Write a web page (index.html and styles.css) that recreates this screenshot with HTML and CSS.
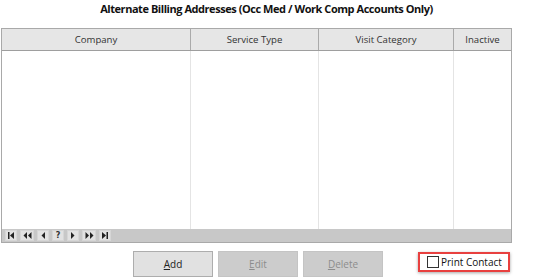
FILE: index.html
```html
<!DOCTYPE html>
<html lang="en">
<head>
    <meta charset="UTF-8">
    <title>Alternate Billing Addresses</title>
    <link rel="stylesheet" href="styles.css">
</head>
<body>
    <h1 class="title">Alternate Billing Addresses (Occ Med / Work Comp Accounts Only)</h1>

    <div class="grid">
        <div class="grid-head">
            <div class="col col-company">Company</div>
            <div class="col col-service">Service Type</div>
            <div class="col col-visit">Visit Category</div>
            <div class="col col-inactive">Inactive</div>
        </div>
        <div class="grid-body">
            <div class="col col-company"></div>
            <div class="col col-service"></div>
            <div class="col col-visit"></div>
            <div class="col col-inactive"></div>
        </div>
        <div class="nav">
            <button class="nav-btn">
                <svg width="8" height="7" viewBox="0 0 8 7"><rect x="1" y="0" width="1.5" height="7"/><path d="M7 0 L3 3.5 L7 7 Z"/></svg>
            </button>
            <button class="nav-btn nav-wide">
                <svg width="9" height="7" viewBox="0 0 9 7"><path d="M4 0 L0.5 3.5 L4 7 Z"/><path d="M8.5 0 L5 3.5 L8.5 7 Z"/></svg>
            </button>
            <button class="nav-btn">
                <svg width="6" height="7" viewBox="0 0 6 7"><path d="M5 0 L1.5 3.5 L5 7 Z"/></svg>
            </button>
            <button class="nav-btn nav-q">?</button>
            <button class="nav-btn">
                <svg width="6" height="7" viewBox="0 0 6 7"><path d="M1 0 L4.5 3.5 L1 7 Z"/></svg>
            </button>
            <button class="nav-btn nav-wide">
                <svg width="9" height="7" viewBox="0 0 9 7"><path d="M0.5 0 L4 3.5 L0.5 7 Z"/><path d="M5 0 L8.5 3.5 L5 7 Z"/></svg>
            </button>
            <button class="nav-btn">
                <svg width="8" height="7" viewBox="0 0 8 7"><path d="M1 0 L5 3.5 L1 7 Z"/><rect x="5.5" y="0" width="1.5" height="7"/></svg>
            </button>
        </div>
    </div>

    <div class="actions">
        <button class="btn"><u>A</u>dd</button>
        <button class="btn" disabled><u>E</u>dit</button>
        <button class="btn" disabled><u>D</u>elete</button>
        <label class="print-contact">
            <span class="check"></span>
            Print Contact
        </label>
    </div>
</body>
</html>
```

FILE: styles.css
```css
body {
    margin: 0;
    width: 533px;
    height: 279px;
    background: #ffffff;
    font-family: 'Open Sans', 'Noto Sans', sans-serif;
    color: #1a1a1a;
    overflow: hidden;
}
.title {
    margin: 0;
    padding-top: 1px;
    height: 27px;
    font-size: 11px;
    font-weight: bold;
    letter-spacing: -0.45px;
    text-align: center;
    line-height: 16px;
    color: #111111;
}
.grid {
    margin-left: 1px;
    width: 509px;
    border: 1px solid #a9a9a9;
    display: flex;
    flex-direction: column;
}
.grid-head {
    display: flex;
    height: 21px;
    background: #e6e6e6;
    border-bottom: 1px solid #9e9e9e;
}
.grid-head .col {
    font-size: 9.6px;
    line-height: 21px;
    text-align: center;
    border-right: 1px solid #aaaaaa;
    color: #333333;
}
.grid-body {
    display: flex;
    height: 178px;
    background: #ffffff;
}
.grid-body .col {
    border-right: 1px solid #e4e4e4;
}
.col-company {
    width: 188px;
}
.col-service {
    width: 127px;
}
.col-visit {
    width: 134px;
}
.col-inactive {
    flex: 1;
    border-right: none !important;
}
.nav {
    display: flex;
    align-items: center;
    gap: 3px;
    height: 13px;
    padding: 0 3px;
    background: #c8c8c8;
}
.nav-btn {
    width: 12px;
    height: 11px;
    padding: 0;
    border: 1px solid #d6d6d6;
    background: #e2e2e2;
    display: flex;
    align-items: center;
    justify-content: center;
    fill: #222222;
}
.nav-wide {
    width: 14px;
}
.nav-q {
    font-family: 'DejaVu Sans', sans-serif;
    font-size: 8px;
    font-weight: bold;
    color: #333333;
    line-height: 9px;
}
.actions {
    display: flex;
    align-items: flex-start;
    margin-top: 8px;
    padding-left: 133px;
    gap: 5px;
}
.btn {
    width: 80px;
    height: 26px;
    border: 1px solid #adadad;
    background: #e1e1e1;
    font-family: 'Open Sans', 'Noto Sans', sans-serif;
    font-size: 10px;
    color: #222222;
}
.btn:disabled {
    background: #cccccc;
    border-color: #c4c4c4;
    color: #8c8c8c;
}
.print-contact {
    box-sizing: border-box;
    margin-top: 1px;
    margin-left: 30px;
    width: 92px;
    height: 20px;
    display: flex;
    align-items: center;
    gap: 2px;
    padding: 0 0 0 7px;
    border: 2px solid #e8403f;
    box-shadow: 0 1px 3px rgba(0, 0, 0, 0.35);
    font-size: 10px;
    color: #111111;
    white-space: nowrap;
}
.check {
    box-sizing: border-box;
    width: 12px;
    height: 12px;
    border: 1px solid #333333;
    background: #ffffff;
}
```
